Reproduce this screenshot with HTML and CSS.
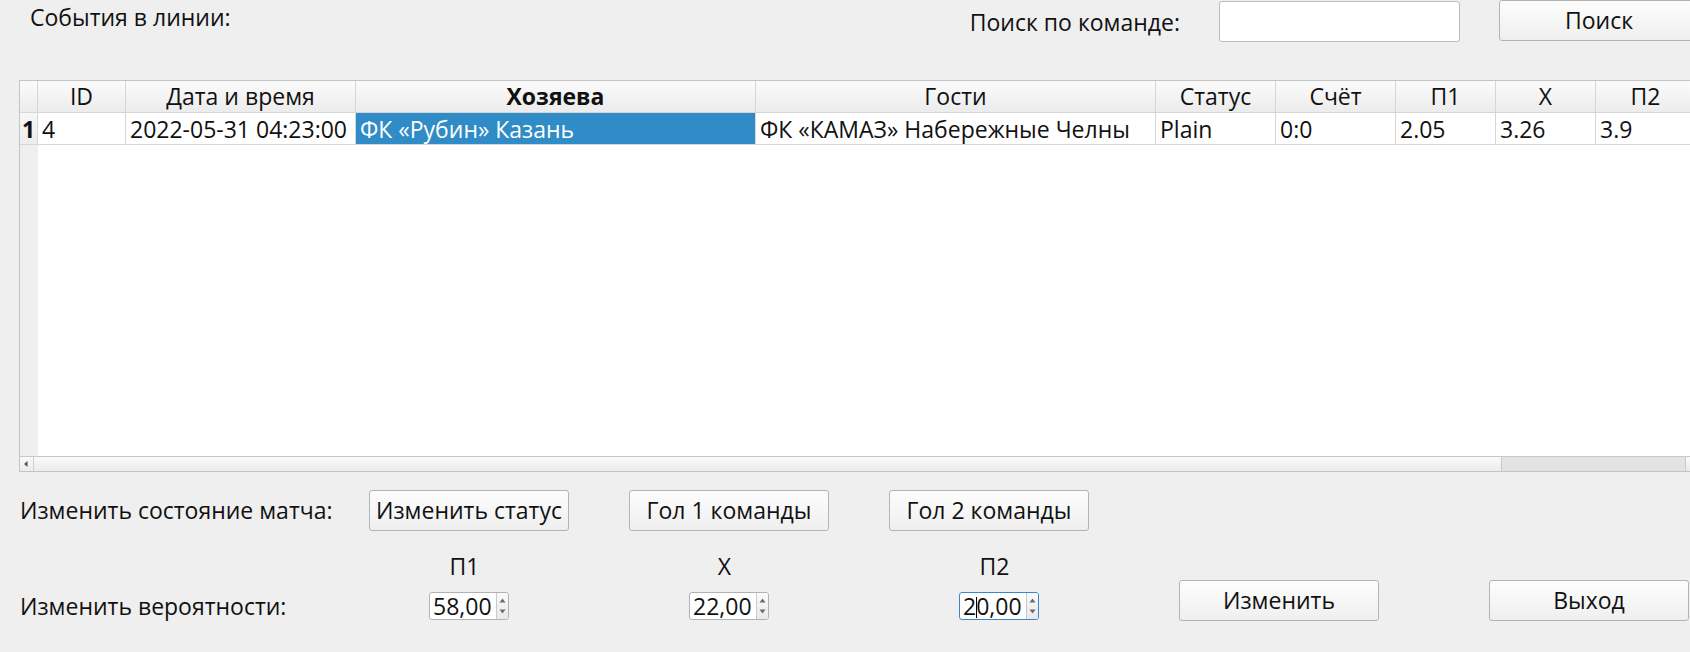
FILE: index.html
```html
<!DOCTYPE html>
<html lang="ru">
<head>
<meta charset="utf-8">
<title>События в линии</title>
<link rel="stylesheet" href="styles.css">
</head>
<body>
<div class="app">
  <div class="top">
    <div class="title">События в линии:</div>
    <div class="search-label">Поиск по команде:</div>
    <div class="search-input"></div>
    <button class="btn btn-search">Поиск</button>
  </div>

  <div class="grid">
    <div class="row head">
      <div class="c w-rh"></div>
      <div class="c w-id">ID</div>
      <div class="c w-date">Дата и время</div>
      <div class="c w-home bold">Хозяева</div>
      <div class="c w-guest">Гости</div>
      <div class="c w-status">Статус</div>
      <div class="c w-score">Счёт</div>
      <div class="c w-p1">П1</div>
      <div class="c w-x">X</div>
      <div class="c w-p2">П2</div>
      <div class="c c-rest"></div>
    </div>
    <div class="row data">
      <div class="c w-rh rh">1</div>
      <div class="c w-id">4</div>
      <div class="c w-date">2022-05-31 04:23:00</div>
      <div class="c w-home selected">ФК «Рубин» Казань</div>
      <div class="c w-guest">ФК «КАМАЗ» Набережные Челны</div>
      <div class="c w-status">Plain</div>
      <div class="c w-score">0:0</div>
      <div class="c w-p1">2.05</div>
      <div class="c w-x">3.26</div>
      <div class="c w-p2">3.9</div>
      <div class="c c-rest"></div>
    </div>
    <div class="filler"><div class="rh-fill"></div></div>
    <div class="hscroll">
      <div class="sb-left">
        <svg width="6" height="8" viewBox="0 0 6 8"><polygon points="4.5,1 4.5,7 1,4" fill="#555"/></svg>
      </div>
      <div class="sb-track"><div class="sb-handle"></div></div>
      <div class="sb-right"></div>
    </div>
  </div>

  <div class="actions">
    <div class="act-label">Изменить состояние матча:</div>
    <button class="btn">Изменить статус</button>
    <button class="btn ml60">Гол 1 команды</button>
    <button class="btn ml60">Гол 2 команды</button>
  </div>

  <div class="probs">
    <div class="probs-label">Изменить вероятности:</div>
    <div class="spin-col">
      <div class="spin-title">П1</div>
      <div class="spin">
        <div class="spin-val">58,00</div>
        <div class="spin-btns"><svg width="11" height="26" viewBox="0 0 11 26"><polygon points="2.5,9.5 8.5,9.5 5.5,5.5" fill="#6a6a6a"/><polygon points="2.5,16.5 8.5,16.5 5.5,20.5" fill="#6a6a6a"/></svg></div>
      </div>
    </div>
    <div class="spin-col ml180">
      <div class="spin-title">X</div>
      <div class="spin">
        <div class="spin-val">22,00</div>
        <div class="spin-btns"><svg width="11" height="26" viewBox="0 0 11 26"><polygon points="2.5,9.5 8.5,9.5 5.5,5.5" fill="#6a6a6a"/><polygon points="2.5,16.5 8.5,16.5 5.5,20.5" fill="#6a6a6a"/></svg></div>
      </div>
    </div>
    <div class="spin-col ml190">
      <div class="spin-title">П2</div>
      <div class="spin focus">
        <div class="spin-val">2<span class="caret"></span>0,00</div>
        <div class="spin-btns"><svg width="11" height="26" viewBox="0 0 11 26"><polygon points="2.5,9.5 8.5,9.5 5.5,5.5" fill="#6a6a6a"/><polygon points="2.5,16.5 8.5,16.5 5.5,20.5" fill="#6a6a6a"/></svg></div>
      </div>
    </div>
    <button class="btn btn-low ml140">Изменить</button>
    <button class="btn btn-low ml110">Выход</button>
  </div>
</div>
</body>
</html>
```

FILE: styles.css
```css
html, body {
  margin: 0;
  padding: 0;
}
body {
  background: #efefef;
  overflow: hidden;
  font-family: "Open Sans", "Noto Sans", sans-serif;
  font-size: 23px;
  color: #111;
}
.app {
  width: 1700px;
}

/* top bar */
.top {
  display: flex;
  align-items: flex-start;
  height: 80px;
  padding: 0 1px 0 30px;
  box-sizing: border-box;
}
.title {
  flex: 1;
  line-height: 32px;
  margin-top: 1px;
}
.search-label {
  line-height: 32px;
  margin-top: 6px;
}
.search-input {
  width: 241px;
  height: 41px;
  margin: 1px 0 0 39px;
  box-sizing: border-box;
  border: 1px solid #bcbcbc;
  border-radius: 3px;
  background: #fff;
}
.btn {
  width: 200px;
  height: 41px;
  flex-shrink: 0;
  box-sizing: border-box;
  border: 1px solid #b4b4b4;
  border-radius: 3px;
  background: linear-gradient(#fdfdfd, #efefef);
  font: inherit;
  line-height: 39px;
  padding: 0;
  color: #111;
  text-align: center;
  white-space: nowrap;
}
.btn-search {
  margin-left: 39px;
}

/* table */
.grid {
  margin-left: 19px;
  height: 392px;
  border: 1px solid #c4c4c4;
  box-sizing: border-box;
  display: flex;
  flex-direction: column;
  background: #fff;
}
.row {
  display: flex;
  height: 32px;
  flex-shrink: 0;
}
.c {
  box-sizing: border-box;
  border-right: 1px solid #d6d6d6;
  border-bottom: 1px solid #d6d6d6;
  padding: 0 4px;
  white-space: nowrap;
  overflow: hidden;
  flex-shrink: 0;
}
.head .c {
  background: linear-gradient(#fbfbfb, #ececec);
  text-align: center;
  line-height: 31px;
  padding: 0;
}
.head .bold {
  font-weight: 700;
}
.data .c {
  line-height: 31px;
  padding-top: 1px;
}
.data .rh {
  background: linear-gradient(#f8f8f8, #ececec);
  font-weight: 700;
  text-align: center;
  padding: 1px 0 0;
}
.data .selected {
  background: #308cc6;
  color: #fff;
}
.w-rh { width: 18px; padding: 0; }
.w-id { width: 88px; }
.w-date { width: 230px; }
.w-home { width: 400px; }
.w-guest { width: 400px; }
.w-status { width: 120px; }
.w-score { width: 120px; }
.w-p1 { width: 100px; }
.w-x { width: 100px; }
.w-p2 { width: 100px; }
.c-rest {
  flex: 1;
  border-right: none;
}

.filler {
  flex: 1;
  display: flex;
}
.rh-fill {
  width: 18px;
  background: #efefef;
}

.hscroll {
  height: 15px;
  flex-shrink: 0;
  border-top: 1px solid #c8c8c8;
  box-sizing: border-box;
  display: flex;
  background: linear-gradient(#fafafa, #ebebeb);
}
.sb-left {
  width: 14px;
  border-right: 1px solid #cfcfcf;
  box-sizing: border-box;
  display: flex;
  align-items: center;
  justify-content: center;
}
.sb-left svg {
  display: block;
  margin-left: -2px;
}
.sb-track {
  flex: 1;
  display: flex;
  justify-content: flex-end;
}
.sb-handle {
  width: 185px;
  box-sizing: border-box;
  background: #e3e3e3;
  border-left: 1px solid #c9c9c9;
  border-right: 1px solid #c9c9c9;
}
.sb-right {
  width: 13px;
}

/* actions */
.actions {
  display: flex;
  align-items: flex-start;
  margin-top: 18px;
  padding-left: 20px;
}
.act-label {
  width: 349px;
  flex-shrink: 0;
  line-height: 39px;
  margin-top: 1px;
}
.ml60 { margin-left: 60px; }
.ml110 { margin-left: 110px; }
.ml140 { margin-left: 140px; }
.ml180 { margin-left: 180px; }
.ml190 { margin-left: 190px; }

/* probabilities */
.probs {
  display: flex;
  align-items: flex-start;
  padding-left: 20px;
}
.probs-label {
  width: 409px;
  flex-shrink: 0;
  line-height: 28px;
  margin-top: 61px;
}
.spin-col {
  width: 80px;
  flex-shrink: 0;
  margin-top: 19px;
  display: flex;
  flex-direction: column;
}
.spin-title {
  line-height: 32px;
  text-align: center;
  padding-right: 9px;
}
.spin {
  margin-top: 10px;
  height: 28px;
  box-sizing: border-box;
  display: flex;
  border: 1px solid #b2b2b2;
  border-radius: 3px;
  background: #fff;
}
.spin.focus {
  border-color: #3a86c8;
}
.spin-val {
  flex: 1;
  padding: 1px 0 0 3px;
  height: 26px;
  box-sizing: border-box;
  line-height: 24px;
  white-space: nowrap;
}
.spin-btns {
  width: 12px;
  box-sizing: border-box;
  border-left: 1px solid #cacaca;
  border-radius: 0 2px 2px 0;
  background: linear-gradient(#fafafa, #e9e9e9);
}
.spin-btns svg {
  display: block;
}
.caret {
  display: inline-block;
  width: 1px;
  height: 21px;
  background: #000;
  vertical-align: -3px;
  margin: 0 -1px 0 0;
}
.btn-low {
  margin-top: 49px;
}
```
